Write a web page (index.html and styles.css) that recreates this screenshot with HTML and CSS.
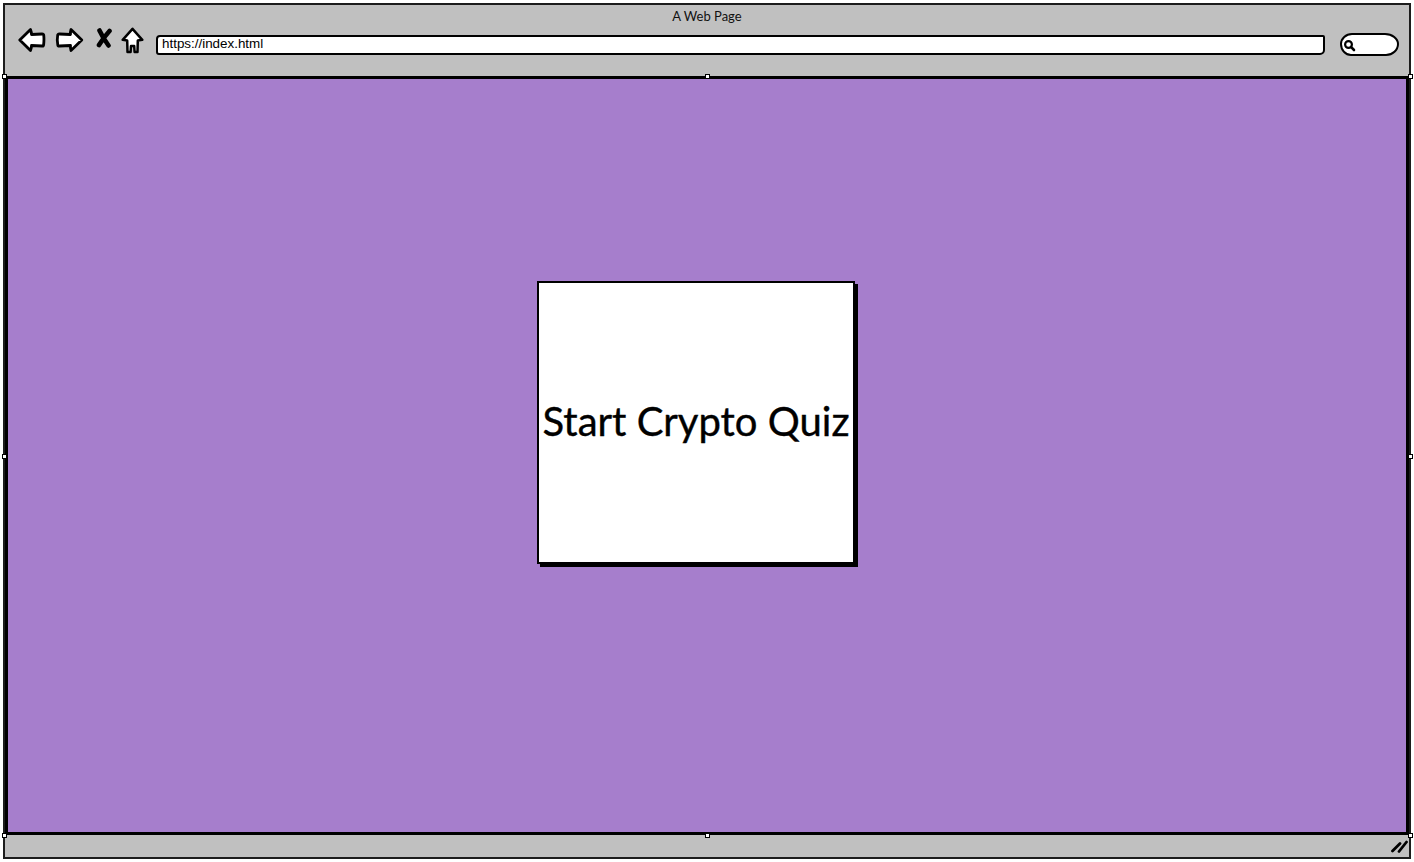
FILE: index.html
```html
<!DOCTYPE html>
<html>
<head>
<meta charset="UTF-8">
<title>A Web Page</title>
<link rel="stylesheet" href="styles.css">
</head>
<body>

<div class="window">

	<div class="toolbar">
		<div class="title">A Web Page</div>
		<div class="controls">
			<svg class="icon-back" width="28" height="26" viewBox="0 0 28 26"><path d="M1.8 13 L12.5 2.5 Q13.5 5 13.5 7.5 L24 7 Q26 7 25.8 9 Q26.2 13 25.6 18 Q25.5 19.5 24 19 L13.5 18.5 Q13.5 21 12.5 23.5 Z" fill="#fff" stroke="#000" stroke-width="2.8" stroke-linejoin="round"/></svg>
			<svg class="icon-forward" width="29" height="26" viewBox="0 0 29 26"><path d="M26.8 13 L16 2.5 Q15.2 5 15.5 7.5 L4.5 7 Q2.5 7 2.6 9 Q1.8 13 2.8 18 Q3 19.5 4.5 19 L15.5 18.5 Q15.2 21 16 23.5 Z" fill="#fff" stroke="#000" stroke-width="2.8" stroke-linejoin="round"/></svg>
			<svg class="icon-stop" width="16" height="20" viewBox="0 0 16 20"><path d="M3.5 2.5 Q7 10 12.5 17.5 M13.5 3 Q8 9 3 17" fill="none" stroke="#000" stroke-width="4.6" stroke-linecap="round"/></svg>
			<svg class="icon-home" width="23" height="27" viewBox="0 0 23 27"><path d="M11.5 1.8 L21.3 12.8 L16.8 13.5 L16.5 25 L13.6 25 L13.2 19 L10 19 L9.6 25 L6.5 25 L6.2 13.5 L1.7 12.8 Z" fill="#fff" stroke="#000" stroke-width="2.5" stroke-linejoin="round"/></svg>
			<div class="address">https://index.html</div>
			<div class="search">
				<svg width="13" height="13" viewBox="0 0 13 13"><circle cx="5.5" cy="5.5" r="3.4" fill="none" stroke="#000" stroke-width="2.2"/><path d="M8.2 8.2 L11 11" stroke="#000" stroke-width="2.6" stroke-linecap="round"/></svg>
			</div>
		</div>
	</div>

	<div class="content">
		<div class="card">Start Crypto Quiz</div>
	</div>

	<div class="statusbar">
		<svg width="17" height="14" viewBox="0 0 17 14"><path d="M1.5 12 L9 4.5 M8 12.5 L15.5 3" fill="none" stroke="#000" stroke-width="2.8" stroke-linecap="round"/></svg>
	</div>

	<!-- selection handles -->
	<span class="handle h-tl"></span>
	<span class="handle h-tc"></span>
	<span class="handle h-tr"></span>
	<span class="handle h-ml"></span>
	<span class="handle h-mr"></span>
	<span class="handle h-bl"></span>
	<span class="handle h-bc"></span>
	<span class="handle h-br"></span>

</div>

</body>
</html>
```

FILE: styles.css
```css
html, body {
	margin: 0;
	padding: 0;
	height: 100%;
	background: #fff;
	overflow: hidden;
}

.window {
	position: relative;
	box-sizing: border-box;
	display: flex;
	flex-direction: column;
	width: 1408px;
	height: 856px;
	margin: 3px 0 0 3px;
	border: 2px solid #1c1c1c;
	background: #c0c0c0;
}

.toolbar {
	height: 71px;
	flex: none;
	display: flex;
	flex-direction: column;
}

.title {
	padding-top: 4px;
	height: 15px;
	line-height: 15px;
	text-align: center;
	font-family: Lato, "Noto Sans", sans-serif;
	font-size: 13px;
	color: #111;
}

.controls {
	display: flex;
	align-items: center;
	height: 30px;
	margin-top: 1px;
	padding-left: 13px;
}

.icon-forward {
	margin-left: 9px;
}

.icon-stop {
	margin: 0 0 4px 12px;
}

.icon-home {
	margin-left: 9px;
}

.address {
	box-sizing: border-box;
	width: 1169px;
	height: 20px;
	margin: 9px 0 0 12px;
	padding-left: 4px;
	border: 2px solid #000;
	border-radius: 4px 2px 5px 3px;
	background: #fff;
	font-family: "Liberation Sans", Arial, sans-serif;
	font-size: 13.4px;
	line-height: 13px;
	color: #000;
}

.search {
	box-sizing: border-box;
	display: flex;
	align-items: center;
	width: 59px;
	height: 23px;
	margin: 8px 0 0 15px;
	padding: 2px 0 0 1px;
	border: 2px solid #000;
	border-radius: 12px 14px 13px 11px / 11px 11px 12px 12px;
	background: #fff;
}

.content {
	box-sizing: border-box;
	flex: 1;
	padding: 202px 0 0 529px;
	border: 3px solid #000;
	background: #a67ecc;
}

.card {
	box-sizing: border-box;
	display: flex;
	align-items: center;
	justify-content: center;
	width: 318px;
	height: 283px;
	padding-bottom: 4px;
	border: 2px solid #000;
	box-shadow: 3px 3px 0 #000;
	background: #fff;
	font-family: Lato, "Noto Sans", sans-serif;
	font-size: 40px;
	white-space: nowrap;
	-webkit-text-stroke: 0.4px #000;
	color: #000;
}

.statusbar {
	height: 22px;
	flex: none;
	display: flex;
	align-items: center;
	justify-content: flex-end;
	padding-right: 1px;
}

.handle {
	position: absolute;
	box-sizing: border-box;
	width: 5px;
	height: 5px;
	border: 1px solid #000;
	background: #fff;
}

.h-tl { left: -3px; top: 69px; }
.h-tc { left: 700px; top: 69px; }
.h-tr { left: 1403px; top: 69px; }
.h-ml { left: -3px; top: 449px; }
.h-mr { left: 1403px; top: 449px; }
.h-bl { left: -3px; top: 828px; }
.h-bc { left: 700px; top: 828px; }
.h-br { left: 1403px; top: 828px; }
```
